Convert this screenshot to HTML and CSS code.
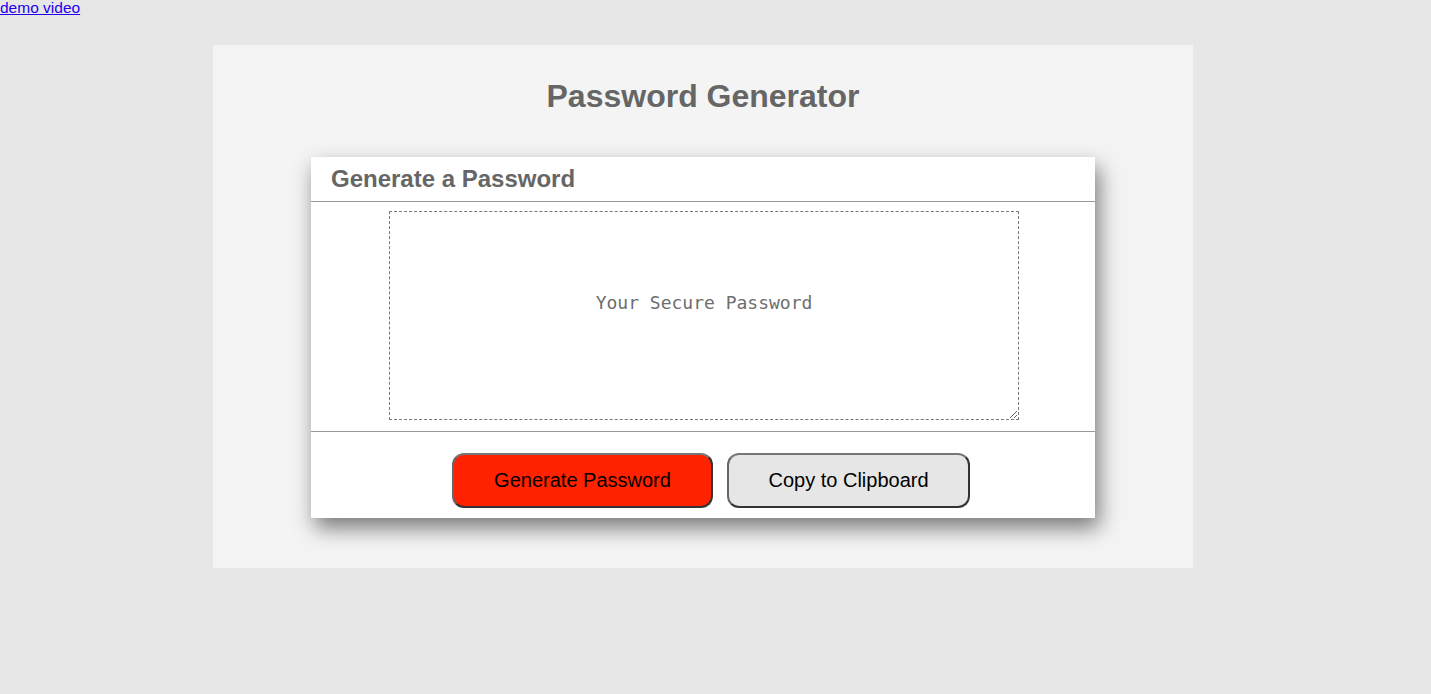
FILE: index.html
```html
<!DOCTYPE html>
<html lang="en">
<head>
<meta charset="utf-8">
<title>Password Generator</title>
<link rel="stylesheet" href="styles.css">
</head>
<body>
<div class="top-link"><a href="#">demo video</a></div>
<div class="wrapper">
  <h1 class="title">Password Generator</h1>
  <div class="card">
    <div class="card-header">
      <h2 class="card-title">Generate a Password</h2>
    </div>
    <div class="card-body">
      <textarea class="password" readonly placeholder="Your Secure Password"></textarea>
    </div>
    <div class="card-footer">
      <button class="btn btn-generate">Generate Password</button>
      <button class="btn btn-copy">Copy to Clipboard</button>
    </div>
  </div>
</div>
</body>
</html>
```
FILE: styles.css
```css
html, body {
  margin: 0;
  padding: 0;
}
body {
  background: #e7e7e7;
  font-family: "Liberation Sans", Arial, sans-serif;
  font-size: 16px;
}
.top-link {
  line-height: 16px;
  height: 18px;
  font-size: 15.5px;
}
.top-link a {
  color: #2200ee;
}
.wrapper {
  width: 980px;
  margin: 27px auto 0 213px;
  background: #f4f4f4;
  padding: 32px 0 50px;
  box-sizing: border-box;
  height: 523px;
}
.title {
  margin: 0 0 42px;
  text-align: center;
  font-size: 32px;
  line-height: 38px;
  font-weight: bold;
  color: #666;
}
.card {
  width: 784px;
  margin: 0 auto;
  background: #fff;
  box-shadow: 4px 10px 20px rgba(0, 0, 0, 0.5);
}
.card-header {
  border-bottom: 1px solid #999;
  padding: 0 20px;
  height: 44px;
}
.card-title {
  margin: 0;
  font-size: 24px;
  line-height: 44px;
  font-weight: bold;
  color: #666;
}
.card-body {
  padding: 9px 0 11px 2px;
  border-bottom: 1px solid #999;
}
.password {
  display: block;
  width: 630px;
  height: 209px;
  margin: 0 auto;
  box-sizing: border-box;
  border: 1px dashed #777;
  resize: both;
  outline: none;
  padding: 80px 10px 10px;
  font-family: "DejaVu Sans Mono", monospace;
  font-size: 18px;
  text-align: center;
  color: #666;
  background: #fff;
}
.password::placeholder {
  color: #6e6e6e;
}
.card-footer {
  display: flex;
  justify-content: center;
  gap: 14px;
  padding: 21px 0 10px 16px;
}
.btn {
  height: 55px;
  border: 2px solid #333;
  border-top-color: #777;
  border-left-color: #666;
  border-radius: 12px;
  font-family: "Liberation Sans", Arial, sans-serif;
  font-size: 20px;
  color: #000;
  padding: 0;
  cursor: pointer;
}
.btn-generate {
  width: 261px;
  background: #ff2200;
}
.btn-copy {
  width: 243px;
  background: #e6e6e6;
}
```
